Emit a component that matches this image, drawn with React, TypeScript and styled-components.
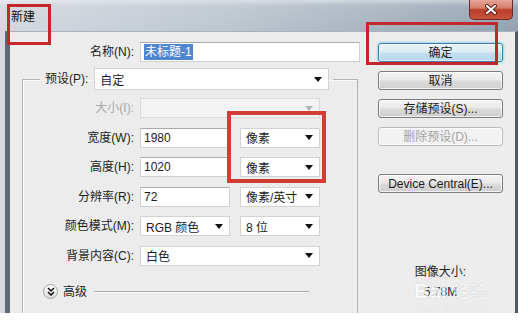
import React from "react";
import styled, { createGlobalStyle } from "styled-components";

const Global = createGlobalStyle`
  html, body { margin: 0; padding: 0; background: #fff; }
  body {
    font-family: "Liberation Sans", "Noto Sans CJK SC", sans-serif;
    font-size: 12px;
    color: #1c1c1c;
  }
  * { box-sizing: border-box; }
`;

const Root = styled.div`
  position: relative;
  width: 528px;
  height: 329px;
  overflow: hidden;
  background: #fff;
`;

const Window = styled.div`
  width: 518px;
  height: 313px;
  display: flex;
  flex-direction: column;
  background: linear-gradient(to right, #d3d9df 0%, #bcc5ce 45%, #93a2b1 100%);
`;

const TitleBar = styled.div`
  height: 31px;
  flex: none;
  display: flex;
  justify-content: space-between;
  padding-left: 11px;
  background: linear-gradient(to bottom, rgba(255,255,255,0.45) 0%, rgba(255,255,255,0.1) 20%, rgba(255,255,255,0) 100%);
`;

const Title = styled.span`
  margin-top: 9px;
  font-size: 12px;
  color: #111;
  line-height: 16px;
`;

const CloseButton = styled.div`
  width: 44px;
  height: 20px;
  margin-right: 5px;
  border: 1px solid #6e2a22;
  border-top: none;
  border-radius: 0 0 5px 5px;
  background: linear-gradient(to bottom, #e6a597 0%, #d77c69 42%, #bb3d2a 52%, #c8543e 100%);
  display: flex;
  align-items: center;
  justify-content: center;
`;

const Body = styled.div`
  flex: 1;
  display: flex;
  padding-left: 5px;
  min-height: 0;
`;

const Client = styled.div`
  flex: 1;
  display: flex;
  background: #ececec;
  border-left: 5px solid #5d6874;
  border-right: 3px solid #4e5964;
  border-top: 1px solid #a7b2bc;
  overflow: hidden;
`;

const LeftCol = styled.div`
  width: 350px;
  flex: none;
  padding-top: 10px;
  display: flex;
  flex-direction: column;
`;

const NameRow = styled.div`
  display: grid;
  grid-template-columns: 124px 220px;
  column-gap: 6px;
  align-items: center;
`;

const Label = styled.span<{ $disabled?: boolean }>`
  text-align: right;
  white-space: nowrap;
  color: ${(p) => (p.$disabled ? "#a8a8a8" : "#1c1c1c")};
  line-height: 16px;
`;

const TextInput = styled.div<{ $w?: number }>`
  height: 20px;
  width: ${(p) => (p.$w ? `${p.$w}px` : "100%")};
  background: #fff;
  border: 1px solid #cfcfcf;
  border-top-color: #ababab;
  display: flex;
  align-items: center;
  padding-left: 3px;
  white-space: nowrap;
`;

const Selected = styled.span`
  background: #4f86d2;
  color: #fff;
  padding: 0 1px;
  line-height: 16px;
`;

const Group = styled.fieldset`
  margin: 6px 0 0 12px;
  width: 336px;
  padding: 0 0 40px 0;
  min-width: 0;
  border: 1px solid #b3b3b3;
  box-shadow: inset 1px 1px 0 #fafafa;
`;

const Legend = styled.legend`
  margin-left: 17px;
  padding: 0 4px 0 5px;
  display: flex;
  align-items: center;
  gap: 6px;
`;

const Rows = styled.div`
  padding-top: 8px;
  display: flex;
  flex-direction: column;
  gap: 9.6px;
`;

const Row = styled.div`
  display: grid;
  grid-template-columns: 111px 180px;
  column-gap: 6px;
  align-items: center;
`;

const Pair = styled.div`
  display: grid;
  grid-template-columns: 90px 80px;
  column-gap: 10px;
`;

const SelectBox = styled.div<{ $w?: number; $h?: number; $disabled?: boolean }>`
  height: ${(p) => p.$h ?? 20}px;
  width: ${(p) => (p.$w ? `${p.$w}px` : "100%")};
  background: ${(p) => (p.$disabled ? "#f3f3f3" : "#fff")};
  border: 1px solid ${(p) => (p.$disabled ? "#d9d9d9" : "#d2d2d2")};
  display: flex;
  align-items: center;
  justify-content: space-between;
  padding: 0 6px 0 5px;
  white-space: nowrap;
`;

const Arrow = ({ color = "#111" }: { color?: string }) => (
  <svg width="8" height="5" viewBox="0 0 8 5">
    <polygon points="0,0 8,0 4,5" fill={color} />
  </svg>
);

const Select = ({
  value = "",
  w,
  h,
  disabled,
}: {
  value?: string;
  w?: number;
  h?: number;
  disabled?: boolean;
}) => (
  <SelectBox $w={w} $h={h} $disabled={disabled}>
    <span>{value}</span>
    <Arrow color={disabled ? "#b5b5b5" : "#111"} />
  </SelectBox>
);

const Advanced = styled.div`
  margin-top: 18px;
  display: flex;
  align-items: center;
  padding-left: 20px;
`;

const ChevronCircle = styled.div`
  width: 15px;
  height: 15px;
  border-radius: 50%;
  border: 1px solid #a3a3a3;
  background: linear-gradient(to bottom, #ffffff, #dedede);
  display: flex;
  align-items: center;
  justify-content: center;
`;

const AdvLabel = styled.span`
  margin-left: 5px;
  line-height: 16px;
`;

const AdvLine = styled.div`
  margin-left: 7px;
  width: 215px;
  height: 2px;
  border-top: 1px solid #a9a9a9;
  border-bottom: 1px solid #fbfbfb;
`;

const RightCol = styled.div`
  flex: 1;
  padding: 11px 0 0 18px;
  display: flex;
  flex-direction: column;
  gap: 9px;
`;

const Button = styled.div<{ $primary?: boolean; $disabled?: boolean; $top?: number }>`
  width: 125px;
  height: 19px;
  margin-top: ${(p) => p.$top ?? 0}px;
  border-radius: 3px;
  display: flex;
  align-items: center;
  justify-content: center;
  white-space: nowrap;
  line-height: 16px;
  color: ${(p) => (p.$disabled ? "#a3a3a3" : "#1c1c1c")};
  border: 1px solid
    ${(p) => (p.$primary ? "#3d7bad" : p.$disabled ? "#b9bdbf" : "#7d7d7d")};
  background: ${(p) =>
    p.$primary
      ? "linear-gradient(to bottom, #eaf4fa 0%, #dbecf6 48%, #c3dff0 52%, #b5d7ee 100%)"
      : p.$disabled
      ? "#f2f2f2"
      : "linear-gradient(to bottom, #f4f4f4 0%, #e9e9e9 48%, #dadada 52%, #cfcfcf 100%)"};
  box-shadow: ${(p) =>
    p.$primary
      ? "0 0 2px 1px rgba(80, 200, 240, 0.55), inset 0 0 0 1px rgba(255,255,255,0.6)"
      : "inset 0 0 0 1px rgba(255,255,255,0.7)"};
`;

const Info = styled.div`
  margin-top: 63px;
  width: 125px;
  display: flex;
  flex-direction: column;
  align-items: center;
  gap: 6px;
  line-height: 14px;
`;

const Annotation = styled.div<{ $x: number; $y: number; $w: number; $h: number; $t?: number; $c?: string }>`
  position: absolute;
  left: ${(p) => p.$x}px;
  top: ${(p) => p.$y}px;
  width: ${(p) => p.$w}px;
  height: ${(p) => p.$h}px;
  border: ${(p) => p.$t ?? 3}px solid ${(p) => p.$c ?? "#c3262b"};
  pointer-events: none;
`;

const Watermark = styled.div`
  position: absolute;
  left: 414px;
  top: 280px;
  display: flex;
  flex-direction: column;
  align-items: flex-start;
  pointer-events: none;
  opacity: 0.7;
`;

const WmMain = styled.div`
  display: flex;
  align-items: baseline;
  gap: 6px;
  font-family: "Liberation Sans", "Noto Sans CJK SC", sans-serif;
  font-weight: bold;
  font-size: 21px;
  color: #ffffff;
  text-shadow: 0 0 1px #c4c4c4, 0 0 1px #c4c4c4;
  line-height: 21px;
`;

const WmCn = styled.span`
  font-size: 17px;
  font-weight: normal;
`;

const WmUrl = styled.span`
  font-size: 9px;
  color: #f8f8f8;
  text-shadow: 0 0 1px #c8c8c8;
  margin-left: 2px;
  line-height: 10px;
`;

export default function App() {
  return (
    <Root>
      <Global />
      <Window>
        <TitleBar>
          <Title>新建</Title>
          <CloseButton>
            <svg width="14" height="11" viewBox="0 0 14 11">
              <path d="M3 2 L11 9 M11 2 L3 9" stroke="#5a1a12" strokeWidth="4" strokeLinecap="round" />
              <path d="M3 2 L11 9 M11 2 L3 9" stroke="#ffffff" strokeWidth="2.2" strokeLinecap="round" />
            </svg>
          </CloseButton>
        </TitleBar>
        <Body>
          <Client>
            <LeftCol>
              <NameRow>
                <Label>名称(N):</Label>
                <TextInput>
                  <Selected>未标题-1</Selected>
                </TextInput>
              </NameRow>
              <Group>
                <Legend>
                  <Label>预设(P):</Label>
                  <Select value="自定" w={235} h={22} />
                </Legend>
                <Rows>
                  <Row>
                    <Label $disabled>大小(I):</Label>
                    <Select disabled />
                  </Row>
                  <Row>
                    <Label>宽度(W):</Label>
                    <Pair>
                      <TextInput>1980</TextInput>
                      <Select value="像素" />
                    </Pair>
                  </Row>
                  <Row>
                    <Label>高度(H):</Label>
                    <Pair>
                      <TextInput>1020</TextInput>
                      <Select value="像素" />
                    </Pair>
                  </Row>
                  <Row>
                    <Label>分辨率(R):</Label>
                    <Pair>
                      <TextInput>72</TextInput>
                      <Select value="像素/英寸" />
                    </Pair>
                  </Row>
                  <Row>
                    <Label>颜色模式(M):</Label>
                    <Pair>
                      <Select value="RGB 颜色" />
                      <Select value="8 位" />
                    </Pair>
                  </Row>
                  <Row>
                    <Label>背景内容(C):</Label>
                    <Select value="白色" />
                  </Row>
                </Rows>
                <Advanced>
                  <ChevronCircle>
                    <svg width="8" height="9" viewBox="0 0 8 9">
                      <path d="M1 1 L4 4 L7 1 M1 5 L4 8 L7 5" stroke="#111" strokeWidth="1.5" fill="none" />
                    </svg>
                  </ChevronCircle>
                  <AdvLabel>高级</AdvLabel>
                  <AdvLine />
                </Advanced>
              </Group>
            </LeftCol>
            <RightCol>
              <Button $primary>确定</Button>
              <Button>取消</Button>
              <Button>存储预设(S)...</Button>
              <Button $disabled>删除预设(D)...</Button>
              <Button $top={19}>Device Central(E)...</Button>
              <Info>
                <span>图像大小:</span>
                <span>5.78M</span>
              </Info>
            </RightCol>
          </Client>
        </Body>
      </Window>
      <Watermark>
        <WmMain>
          <span>Bai</span>
          <WmCn>经验</WmCn>
        </WmMain>
        <WmUrl>jingyan.baidu.com</WmUrl>
      </Watermark>
      <Annotation $x={7} $y={4} $w={44} $h={41} />
      <Annotation $x={366} $y={22} $w={132} $h={43} />
      <Annotation $x={227} $y={111} $w={99} $h={72} $t={4} $c="#cf3f36" />
    </Root>
  );
}
